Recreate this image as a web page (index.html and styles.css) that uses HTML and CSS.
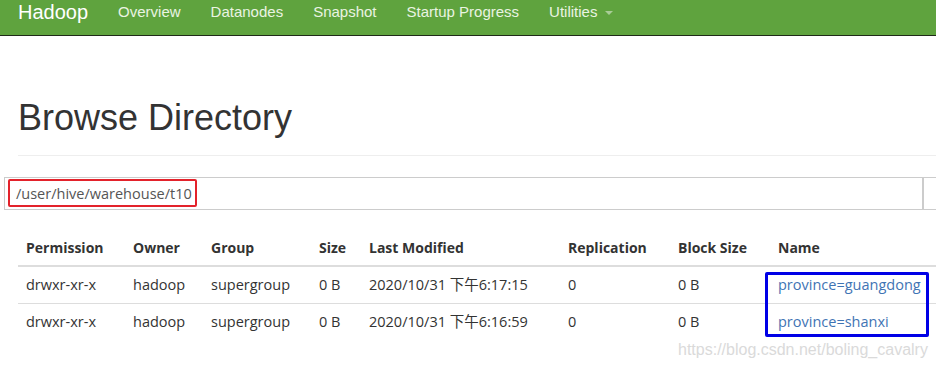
FILE: index.html
```html
<!DOCTYPE html>
<html lang="zh-CN">
<head>
    <meta charset="UTF-8">
    <title>Browsing HDFS</title>
    <link rel="stylesheet" href="styles.css">
</head>
<body>

    <!-- Верхняя панель -->
    <nav class="navbar">
        <a class="brand" href="#">Hadoop</a>
        <a class="nav-link" href="#">Overview</a>
        <a class="nav-link" href="#">Datanodes</a>
        <a class="nav-link" href="#">Snapshot</a>
        <a class="nav-link" href="#">Startup Progress</a>
        <a class="nav-link" href="#">Utilities <span class="caret"></span></a>
    </nav>

    <div class="container">
        <div class="page-header">
            <h1>Browse Directory</h1>
        </div>

        <div class="path-group">
            <div class="path-input">/user/hive/warehouse/t10</div>
            <div class="path-btn"></div>
            <div class="mark mark-red"></div>
        </div>

        <div class="table-wrap">
            <table class="files">
                <colgroup>
                    <col class="c-perm">
                    <col class="c-owner">
                    <col class="c-group">
                    <col class="c-size">
                    <col class="c-date">
                    <col class="c-repl">
                    <col class="c-block">
                    <col>
                </colgroup>
                <thead>
                    <tr>
                        <th>Permission</th>
                        <th>Owner</th>
                        <th>Group</th>
                        <th>Size</th>
                        <th>Last Modified</th>
                        <th>Replication</th>
                        <th>Block Size</th>
                        <th>Name</th>
                    </tr>
                </thead>
                <tbody>
                    <tr>
                        <td>drwxr-xr-x</td>
                        <td>hadoop</td>
                        <td>supergroup</td>
                        <td>0 B</td>
                        <td>2020/10/31 下午6:17:15</td>
                        <td>0</td>
                        <td>0 B</td>
                        <td><a href="#">province=guangdong</a></td>
                    </tr>
                    <tr>
                        <td>drwxr-xr-x</td>
                        <td>hadoop</td>
                        <td>supergroup</td>
                        <td>0 B</td>
                        <td>2020/10/31 下午6:16:59</td>
                        <td>0</td>
                        <td>0 B</td>
                        <td><a href="#">province=shanxi</a></td>
                    </tr>
                </tbody>
            </table>
            <div class="mark mark-blue"></div>
        </div>
    </div>

    <div class="watermark">https://blog.csdn.net/boling_cavalry</div>

</body>
</html>
```

FILE: styles.css
```css
body {
    margin: 0;
    background-color: #fff;
    color: #333;
    font-family: "Open Sans", "Noto Sans CJK SC", sans-serif;
    font-size: 14px;
    overflow: hidden;
    position: relative;
    height: 369px;
}

a {
    text-decoration: none;
}

.navbar {
    display: flex;
    align-items: flex-start;
    height: 35px;
    background-color: #5fa33e;
    border-bottom: 1px solid #1f2a18;
    padding-left: 18px;
    font-family: "Liberation Sans", Arial, sans-serif;
}

.brand {
    color: #fff;
    font-size: 20px;
    line-height: 22px;
    padding: 1px 15px 0 0;
}

.nav-link {
    color: #eaf4e2;
    font-size: 15px;
    line-height: 20px;
    padding: 2px 15px 0;
}

.caret {
    display: inline-block;
    width: 0;
    height: 0;
    margin-left: 3px;
    vertical-align: middle;
    border-top: 4px solid #a9cc97;
    border-left: 4px solid transparent;
    border-right: 4px solid transparent;
}

.container {
    margin-left: 18px;
    width: 1000px;
}

.page-header {
    margin-top: 62px;
    padding-bottom: 17px;
    border-bottom: 1px solid #eee;
}

.page-header h1 {
    margin: 0;
    font-family: "Liberation Sans", Arial, sans-serif;
    font-size: 36px;
    font-weight: normal;
    line-height: 1.1;
    color: #333;
}

.path-group {
    position: relative;
    display: flex;
    margin: 21px 0 19px -14px;
}

.path-input {
    width: 895px;
    height: 31px;
    line-height: 31px;
    padding: 0 11px;
    border: 1px solid #ccc;
    color: #555;
    font-size: 14.5px;
}

.path-btn {
    width: 60px;
    height: 31px;
    border: 1px solid #ccc;
    border-left: 1px solid #ccc;
}

.mark {
    position: absolute;
    border-radius: 2px;
}

.mark-red {
    left: 4px;
    top: 2px;
    width: 185px;
    height: 24px;
    border: 2px solid #e3222b;
}

.table-wrap {
    position: relative;
}

.files {
    width: 100%;
    border-collapse: collapse;
    table-layout: fixed;
}

.c-perm { width: 107px; }
.c-owner { width: 78px; }
.c-group { width: 108px; }
.c-size { width: 50px; }
.c-date { width: 199px; }
.c-repl { width: 110px; }
.c-block { width: 100px; }

.files th,
.files td {
    padding: 8px;
    line-height: 20px;
    text-align: left;
    white-space: nowrap;
}

.files th {
    padding-top: 9px;
    padding-bottom: 7px;
}

.files td {
    font-size: 14.5px;
}

.files th {
    font-weight: bold;
    border-bottom: 2px solid #ddd;
}

.files tbody tr:first-child td {
    border-bottom: 1px solid #ddd;
}

.files a {
    color: #3f74b4;
}

.mark-blue {
    left: 747px;
    top: 43px;
    width: 158px;
    height: 59px;
    border: 3px solid #0000e6;
}

.watermark {
    position: absolute;
    left: 678px;
    top: 341px;
    font-family: "Liberation Sans", Arial, sans-serif;
    font-size: 16px;
    color: #dadada;
}
```
